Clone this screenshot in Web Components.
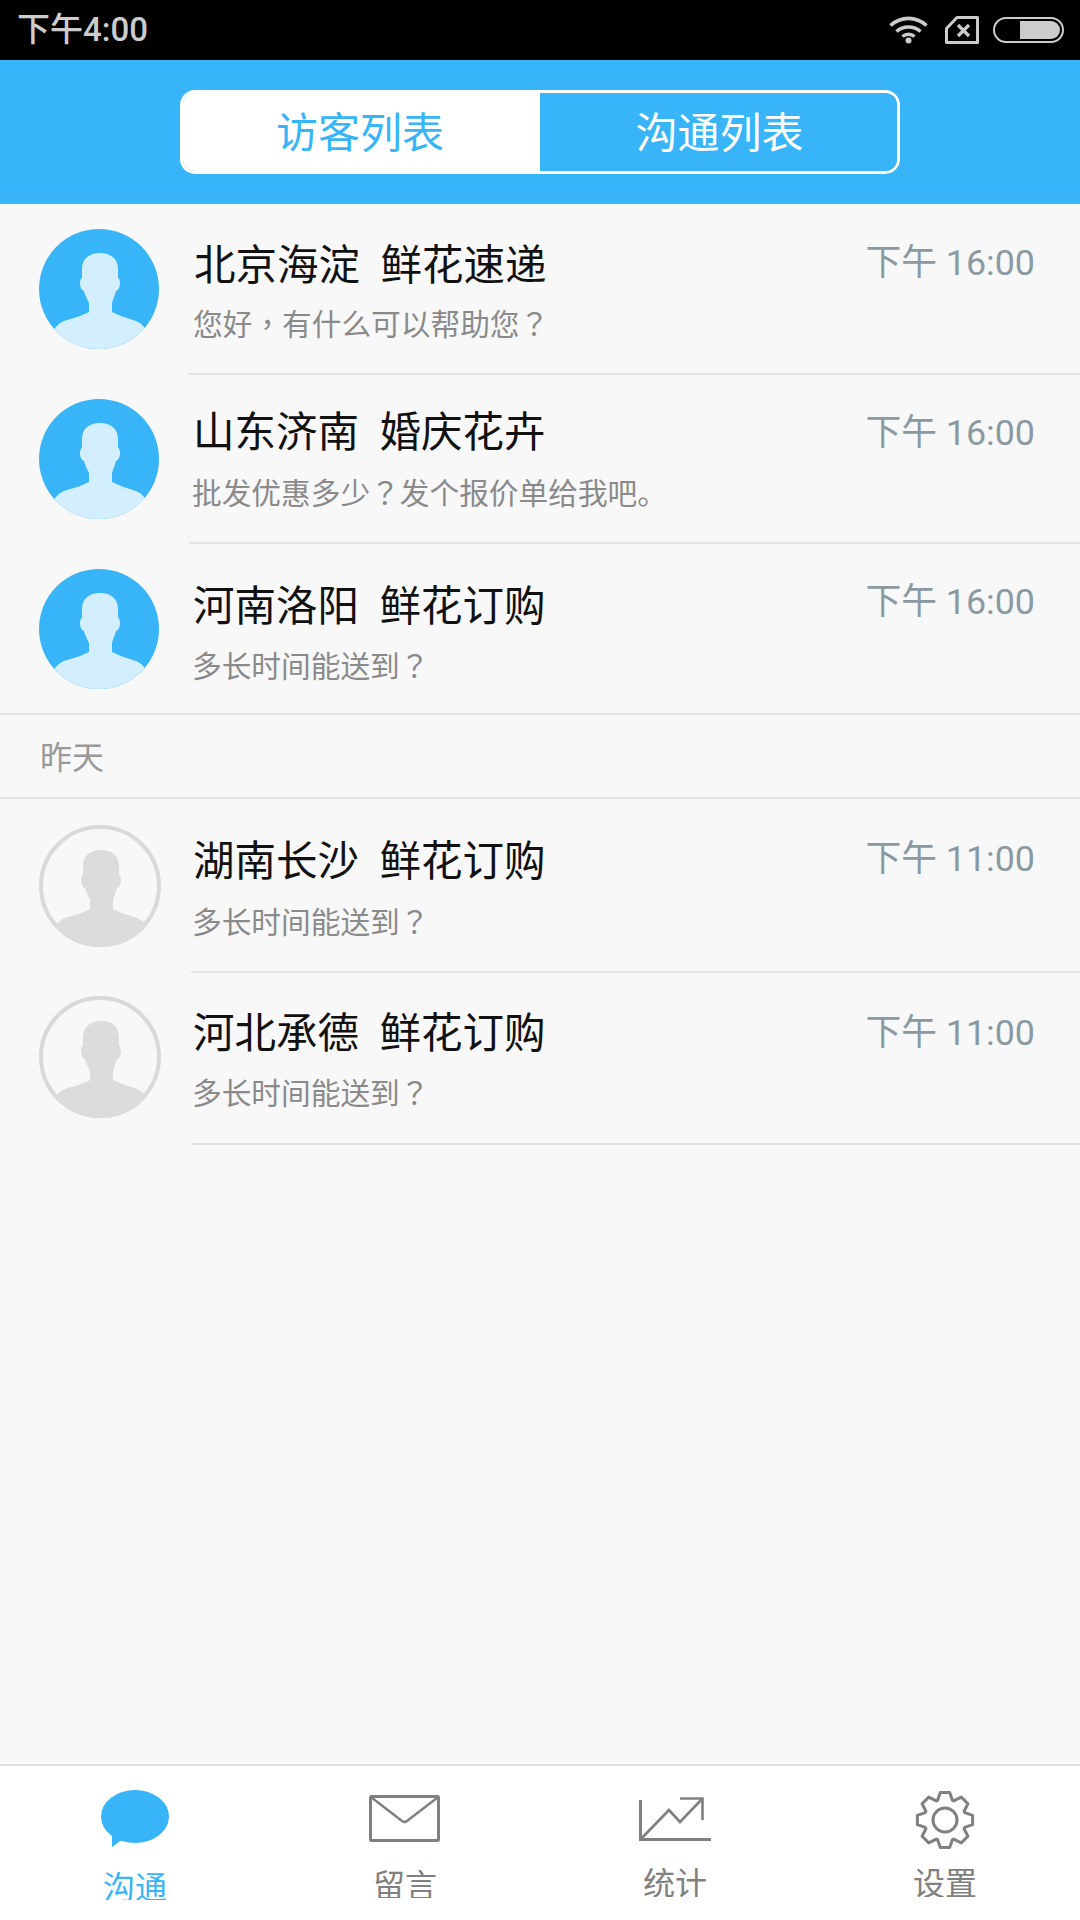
<!DOCTYPE html>
<html lang="zh">
<head>
<meta charset="utf-8">
<title>沟通列表</title>
<style>
html, body { margin: 0; padding: 0; }
body { width: 1080px; height: 1920px; overflow: hidden; background: #f8f8f8; font-family: Roboto, "Noto Sans CJK SC", sans-serif; }
/* the reference centres its full width punctuation, the TC cut does that */
.cp { font-family: "Noto Sans CJK TC", sans-serif; }
</style>
</head>
<body>
<app-screen>
  <status-bar></status-bar>
  <seg-header></seg-header>
  <chat-row style="--h:171px;--av:25px;--tt:37px;--gap:12px;--tm:39px;--tx:-1px">
    <span slot="title">北京海淀  鲜花速递</span>
    <span slot="sub">您好<span class="cp" lang="zh-Hant">，</span>有什么可以帮助您<span class="cp" lang="zh-Hant">？</span></span>
    <span slot="time">下午 16:00</span>
  </chat-row>
  <chat-row style="--h:169px;--av:24px;--tt:33px;--gap:14px;--tm:38px;--tx:-2px">
    <span slot="title">山东济南  婚庆花卉</span>
    <span slot="sub">批发优惠多少<span class="cp" lang="zh-Hant">？</span>发个报价单给我吧。</span>
    <span slot="time">下午 16:00</span>
  </chat-row>
  <chat-row full style="--h:171px;--av:25px;--tt:38px;--gap:13px;--tm:38px;--tx:-2px">
    <span slot="title">河南洛阳  鲜花订购</span>
    <span slot="sub">多长时间能送到<span class="cp" lang="zh-Hant">？</span></span>
    <span slot="time">下午 16:00</span>
  </chat-row>
  <day-label>昨天</day-label>
  <chat-row tone="gray" style="--h:174px;--av:26px;--tt:38px;--gap:14px;--tm:40px;--tx:-1px;--line:191px">
    <span slot="title">湖南长沙  鲜花订购</span>
    <span slot="sub">多长时间能送到<span class="cp" lang="zh-Hant">？</span></span>
    <span slot="time">下午 11:00</span>
  </chat-row>
  <chat-row tone="gray" style="--h:172px;--av:23px;--tt:36px;--gap:13px;--tm:40px;--tx:-1px;--line:191px">
    <span slot="title">河北承德  鲜花订购</span>
    <span slot="sub">多长时间能送到<span class="cp" lang="zh-Hant">？</span></span>
    <span slot="time">下午 11:00</span>
  </chat-row>
  <bottom-tabs></bottom-tabs>
</app-screen>

<script>
class AppScreen extends HTMLElement
{
    constructor()
    {
        super();
        this.attachShadow( { mode: 'open' } );
        this.shadowRoot.innerHTML = `
        <style>
        :host { display: flex; flex-direction: column; width: 1080px; height: 1920px; background: #f8f8f8; }
        ::slotted(bottom-tabs) { margin-top: auto; }
        </style>
        <slot></slot>`;
    }
}
customElements.define( 'app-screen', AppScreen );

class StatusBar extends HTMLElement
{
    constructor()
    {
        super();
        this.attachShadow( { mode: 'open' } );
        this.shadowRoot.innerHTML = `
        <style>
        :host { display: flex; align-items: center; height: 60px; flex: none; background: #000; color: #ccc; padding: 0 16px 0 17px; box-sizing: border-box; }
        .clock { font: 500 33px/60px Roboto, "Noto Sans CJK SC", sans-serif; flex: 1; }
        svg { display: block; }
        .icons { display: flex; align-items: center; }
        </style>
        <span class="clock">下午4:00</span>
        <div class="icons">
            <svg width="39" height="28" viewBox="0 0 39 28" fill="none" stroke="#ccc" stroke-width="3.6">
                <path d="M1.5 9.5 C12 0 27 0 37.5 9.5"/>
                <path d="M7.5 15.5 C14 9.5 25 9.5 31.5 15.5"/>
                <path d="M13.5 20.5 C17 17.5 22 17.5 25.5 20.5"/>
                <circle cx="19.5" cy="24.5" r="3" fill="#ccc" stroke="none"/>
            </svg>
            <svg style="margin-left:17px" width="34" height="28" viewBox="0 0 34 28" fill="none" stroke="#ccc">
                <path d="M12 1.5 H32.5 V26.5 H1.5 V12.5 Z" stroke-width="3" stroke-linejoin="round"/>
                <path d="M13 9 L24 20 M24 9 L13 20" stroke-width="3.2"/>
            </svg>
            <svg style="margin-left:14px" width="71" height="26" viewBox="0 0 71 26" fill="none">
                <rect x="1" y="1" width="69" height="24" rx="12" stroke="#ccc" stroke-width="2"/>
                <path d="M27 4 H58 A9 9 0 0 1 58 22 H27 Z" fill="#ccc"/>
            </svg>
        </div>`;
    }
}
customElements.define( 'status-bar', StatusBar );

class SegHeader extends HTMLElement
{
    constructor()
    {
        super();
        this.attachShadow( { mode: 'open' } );
        this.shadowRoot.innerHTML = `
        <style>
        :host { display: flex; justify-content: center; align-items: center; height: 144px; flex: none; background: #38b5f9; }
        .box { display: flex; width: 720px; height: 84px; box-sizing: border-box; border: 3px solid #fff; border-radius: 15px; overflow: hidden; font: 42px/74px "Noto Sans CJK SC", sans-serif; }
        .box span { width: 50%; box-sizing: border-box; text-align: center; }
        .on { background: #fff; color: #38b5f9; padding-right: 3px; }
        .off { background: #38b5f9; color: #fff; padding-left: 2px; }
        </style>
        <div class="box"><span class="on">访客列表</span><span class="off">沟通列表</span></div>`;
    }
}
customElements.define( 'seg-header', SegHeader );

class UserAvatar extends HTMLElement
{
    constructor()
    {
        super();
        this.attachShadow( { mode: 'open' } );
        const gray = this.getAttribute( 'tone' ) == 'gray';
        const body = 'M10 108 L16 99 C20 94 24 92 28 91 C36 89 44 86 50 83 L50 74 C48 70 46 66 45 62 C43 62 41 58 41 54 C41 51 42 49 43 49 L43 40 C43 30 50 24 61 24 C72 24 79 30 79 40 L79 49 C80 49 81 51 81 54 C81 58 79 62 77 62 C76 66 74 70 73 74 L73 83 C79 86 87 89 94 91 C98 92 102 94 105 98 L112 108 V125 H10 Z';
        const inner = gray
            ? `<clipPath id="round"><circle cx="61" cy="61" r="60"/></clipPath><circle cx="61" cy="61" r="59" fill="none" stroke="#d9d9d9" stroke-width="4"/><path d="${ body }" transform="translate(1 1)" fill="#dcdcdc" clip-path="url(#round)"/>`
            : `<clipPath id="round"><circle cx="60" cy="60" r="60"/></clipPath><circle cx="60" cy="60" r="60" fill="#38b5f9"/><path d="${ body }" fill="#d2eeff" clip-path="url(#round)"/>`;
        const size = gray ? 122 : 120;
        this.shadowRoot.innerHTML = `
        <style>
        :host { display: block; width: ${ size }px; height: ${ size }px; }
        svg { display: block; }
        </style>
        <svg width="${ size }" height="${ size }" viewBox="0 0 ${ size } ${ size }">${ inner }</svg>`;
    }
}
customElements.define( 'user-avatar', UserAvatar );

class ChatRow extends HTMLElement
{
    constructor()
    {
        super();
        this.attachShadow( { mode: 'open' } );
        const tone = this.getAttribute( 'tone' ) || 'blue';
        this.shadowRoot.innerHTML = `
        <style>
        :host { display: flex; flex: none; height: var(--h); box-sizing: border-box; }
        :host([full]) { border-bottom: 2px solid #e4e4e4; }
        .pic { flex: none; width: var(--line, 189px); box-sizing: border-box; padding: var(--av) 0 0 39px; }
        .body { flex: 1; display: flex; box-sizing: border-box; padding: 0 45px 0 calc(6px + var(--tx, 0px)); border-bottom: 2px solid #e4e4e4; }
        :host([full]) .body { border-bottom: none; }
        :host([tone=gray]) .body { padding-left: calc(3px + var(--tx, 0px)); }
        .text { flex: 1; padding-top: var(--tt); }
        .title { font: 41.5px/50px Roboto, "Noto Sans CJK SC", sans-serif; color: #111; white-space: pre; }
        .sub { font: 29.7px/40px Roboto, "Noto Sans CJK SC", sans-serif; color: #8a8a8a; margin: var(--gap) 0 0 -1px; white-space: pre; }
        .time { font: 35.8px/40px Roboto, "Noto Sans CJK SC", sans-serif; color: #8b99a3; margin-top: var(--tm); white-space: pre; }
        </style>
        <div class="pic"><user-avatar tone="${ tone }"></user-avatar></div>
        <div class="body">
            <div class="text">
                <div class="title"><slot name="title"></slot></div>
                <div class="sub"><slot name="sub"></slot></div>
            </div>
            <div class="time"><slot name="time"></slot></div>
        </div>`;
    }
}
customElements.define( 'chat-row', ChatRow );

class DayLabel extends HTMLElement
{
    constructor()
    {
        super();
        this.attachShadow( { mode: 'open' } );
        this.shadowRoot.innerHTML = `
        <style>
        :host { display: block; flex: none; height: 84px; box-sizing: border-box; padding: 20px 0 0 40px; border-bottom: 2px solid #e4e4e4; font: 32px/40px "Noto Sans CJK SC", sans-serif; color: #999; }
        </style>
        <slot></slot>`;
    }
}
customElements.define( 'day-label', DayLabel );

class TabItem extends HTMLElement
{
    constructor()
    {
        super();
        this.attachShadow( { mode: 'open' } );
        this.shadowRoot.innerHTML = `
        <style>
        :host { display: flex; flex-direction: column; align-items: center; flex: 1; color: #808080; }
        :host([active]) { color: #38b5f9; }
        .icon { height: var(--icon-h); margin-top: var(--icon-top); }
        .label { font: 32px/32px "Noto Sans CJK SC", sans-serif; height: var(--label-h, 32px); overflow: hidden; margin-top: var(--label-top); }
        </style>
        <div class="icon"><slot name="icon"></slot></div>
        <div class="label"><slot></slot></div>`;
    }
}
customElements.define( 'tab-item', TabItem );

// eight toothed outline for the settings tab
function gearPath( cx, cy )
{
    let d = '';
    for ( let i = 0; i < 8; i++ )
    {
        const a = i * Math.PI / 4 - Math.PI / 2;
        const pts = [ [ 21, -0.36 ], [ 28, -0.17 ], [ 28, 0.17 ], [ 21, 0.36 ] ];
        pts.forEach( ( p, n ) =>
        {
            const x = cx + p[ 0 ] * Math.cos( a + p[ 1 ] );
            const y = cy + p[ 0 ] * Math.sin( a + p[ 1 ] );
            d += ( i == 0 && n == 0 ? 'M' : 'L' ) + x.toFixed( 1 ) + ' ' + y.toFixed( 1 ) + ' ';
        } );
    }
    return d + 'Z';
}

class BottomTabs extends HTMLElement
{
    constructor()
    {
        super();
        this.attachShadow( { mode: 'open' } );
        this.shadowRoot.innerHTML = `
        <style>
        :host { display: flex; flex: none; height: 156px; box-sizing: border-box; background: #fff; border-top: 2px solid #e0e0e0; }
        svg { display: block; }
        </style>
        <tab-item active style="--icon-top:24px;--icon-h:57px;--label-top:22px;--label-h:31px">
            <svg slot="icon" width="68" height="57" viewBox="0 0 68 57">
                <ellipse cx="34" cy="26.5" rx="34" ry="26.5" fill="#38b5f9"/>
                <path d="M11 40 V57 L22 49 Z" fill="#38b5f9"/>
            </svg>
            沟通
        </tab-item>
        <tab-item style="--icon-top:29px;--icon-h:47px;--label-top:25px;--label-h:31px">
            <svg slot="icon" style="margin-left:-2px" width="71" height="47" viewBox="0 0 71 47" fill="none" stroke="#808080">
                <rect x="1.5" y="1.5" width="68" height="44" rx="1" stroke-width="3"/>
                <path d="M2.5 2.5 L33 26 Q35.5 28 38 26 L68.5 2.5" stroke-width="2.4"/>
            </svg>
            留言
        </tab-item>
        <tab-item style="--icon-top:31px;--icon-h:44px;--label-top:24px">
            <svg slot="icon" width="72" height="44" viewBox="0 0 72 44" fill="none" stroke="#808080" stroke-width="2.6">
                <path d="M1.5 3 V42.5 H72" stroke-width="3"/>
                <path d="M2 42 L30 13 L41 25 L63 2"/>
                <path d="M41 1.5 H63.5 V23"/>
            </svg>
            统计
        </tab-item>
        <tab-item style="--icon-top:24px;--icon-h:59px;--label-top:16px">
            <svg slot="icon" width="60" height="60" viewBox="0 0 60 60" fill="none" stroke="#808080" stroke-width="3" stroke-linejoin="round">
                <path d="${ gearPath( 30, 30 ) }"/>
                <circle cx="30" cy="30" r="12"/>
            </svg>
            设置
        </tab-item>`;
    }
}
customElements.define( 'bottom-tabs', BottomTabs );
</script>
</body>
</html>
